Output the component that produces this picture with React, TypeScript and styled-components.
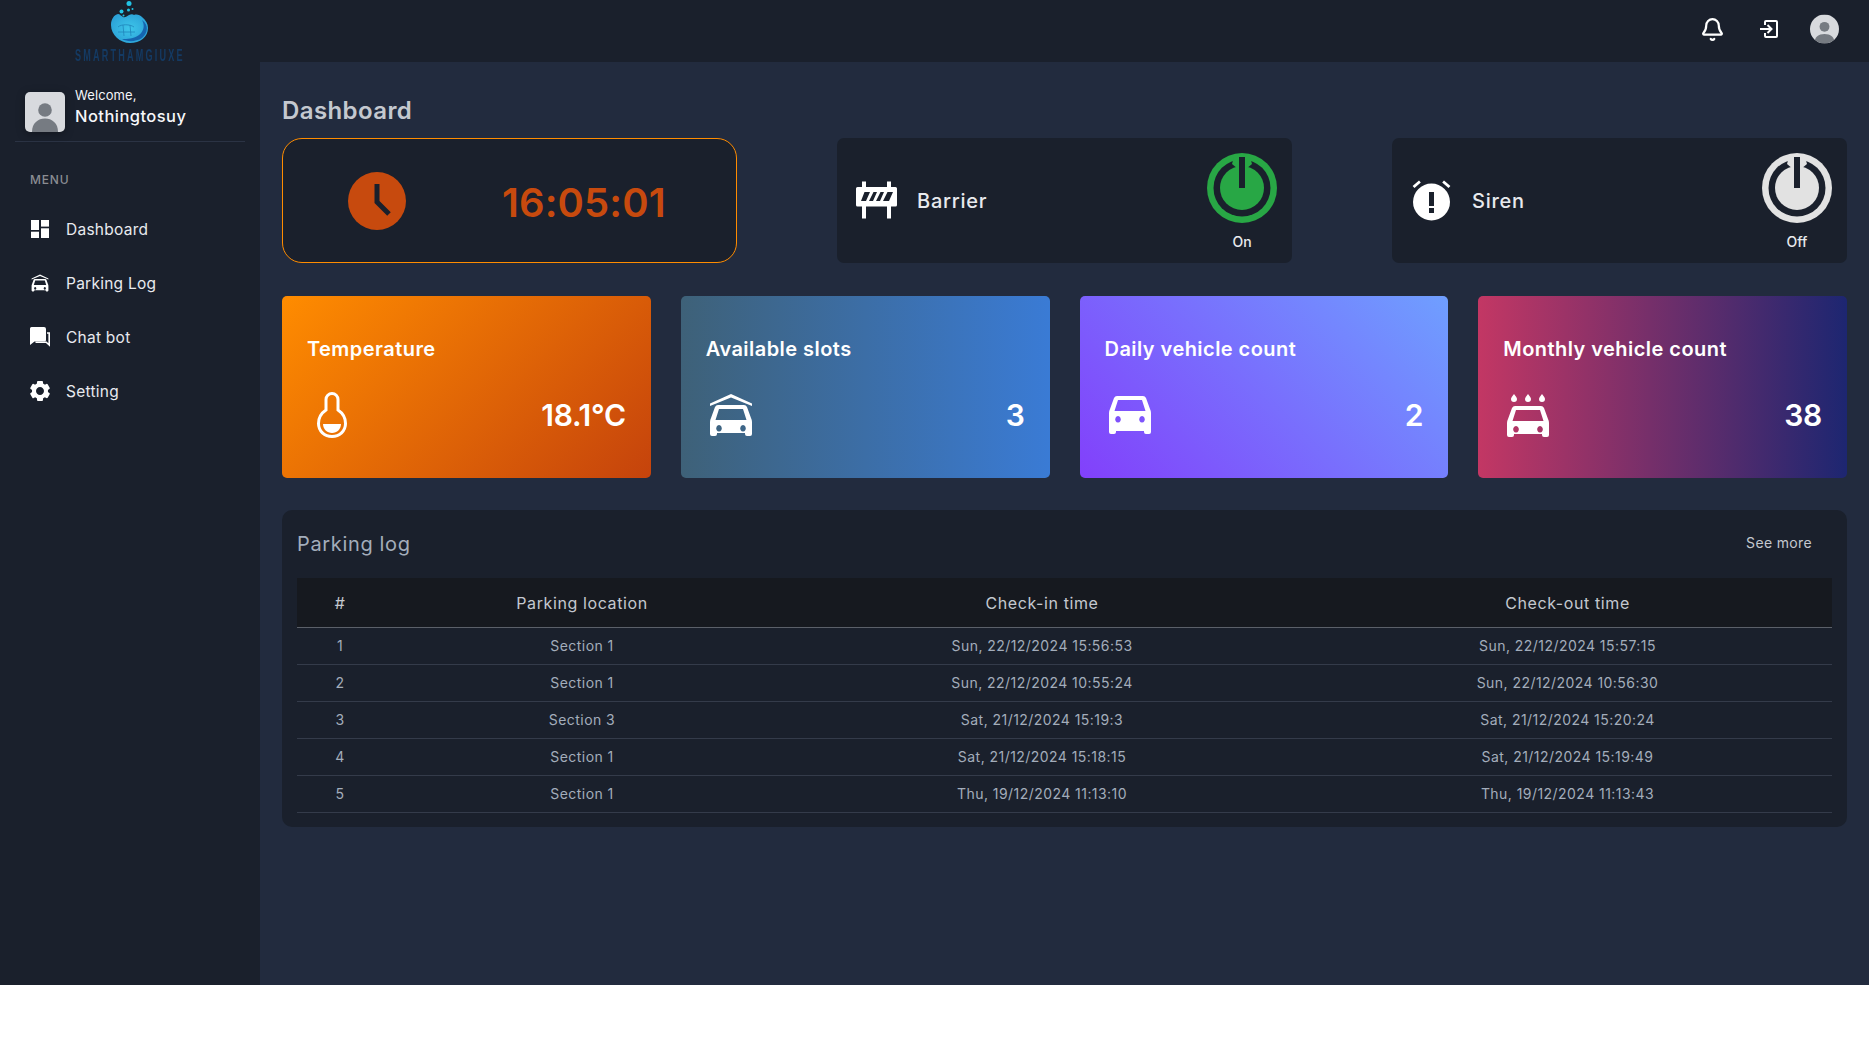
import React from "react";
import styled, { createGlobalStyle } from "styled-components";
import { Bell } from "lucide-react";
import { BiSolidCog } from "react-icons/bi";

const Global = createGlobalStyle`
  html, body { margin: 0; padding: 0; background: #fff; }
  body { font-family: Inter, "Liberation Sans", sans-serif; }
  * { box-sizing: border-box; }
`;

const Shell = styled.div`
  display: flex;
  width: 100%;
  height: 985px;
  background: #222b3e;
  color: #e8eaee;
`;
const Sidebar = styled.aside`
  width: 260px;
  flex: none;
  background: #1a202c;
  display: flex;
  flex-direction: column;
`;
const Brand = styled.div`
  height: 62px;
  display: flex;
  flex-direction: column;
  align-items: center;
`;
const BrandName = styled.div`
  font-family: "Liberation Sans", sans-serif;
  font-size: 16.5px;
  line-height: 14px;
  font-weight: 700;
  letter-spacing: 4px;
  color: #143a63;
  white-space: nowrap;
  transform: scaleX(0.55);
  margin-top: 4px;
`;
const UserBlock = styled.div`
  margin: 30px 15px 0;
  padding: 0 10px;
  height: 50px;
  display: flex;
  gap: 10px;
  border-bottom: 1px solid #2b3344;
`;
const UserText = styled.div`
  display: flex;
  flex-direction: column;
  margin-top: -6px;
`;
const Welcome = styled.span`
  font-size: 13px;
  line-height: 18px;
  letter-spacing: 0.1px;
  color: #f3f5f9;
`;
const UserName = styled.span`
  font-size: 16.5px;
  line-height: 24px;
  font-weight: 500;
  letter-spacing: 0.45px;
  color: #f6f7fa;
`;
const MenuLabel = styled.div`
  margin: 30px 0 0 30px;
  font-size: 12px;
  line-height: 16px;
  font-weight: 500;
  letter-spacing: 0.8px;
  color: #8b8d93;
`;
const Nav = styled.nav`
  display: flex;
  flex-direction: column;
  margin-top: 14px;
`;
const NavItem = styled.a`
  height: 54px;
  padding-left: 30px;
  display: flex;
  align-items: center;
  gap: 16px;
  font-size: 15.5px;
  font-weight: 400;
  letter-spacing: 0.25px;
  color: #e8eaef;
  svg { width: 20px; height: 20px; color: #fff; flex: none; }
`;
const CogGlyph = styled(BiSolidCog)`
  && { width: 24px; height: 24px; margin: 0 -2px; }
`;
const Main = styled.main`
  flex: 1;
  min-width: 0;
  display: flex;
  flex-direction: column;
`;
const TopBar = styled.header`
  height: 62px;
  background: #1a202c;
  display: flex;
  align-items: center;
  justify-content: flex-end;
  gap: 27px;
  padding: 0 30px 4px 0;
`;
const TopIcon = styled.span`
  width: 29px;
  height: 29px;
  display: flex;
  align-items: center;
  justify-content: center;
  color: #fff;
`;
const Content = styled.div`
  padding: 0 22px;
`;
const Title = styled.h1`
  margin: 33px 0 12px;
  font-size: 24px;
  line-height: 31px;
  font-weight: 600;
  letter-spacing: 0.4px;
  color: #c4c8cf;
`;
const TopRow = styled.div`
  display: grid;
  grid-template-columns: repeat(3, 1fr);
  column-gap: 100px;
`;
const ClockCard = styled.div`
  height: 125px;
  background: #1a202c;
  border: 1px solid #ff8c00;
  border-radius: 20px;
  display: flex;
  align-items: center;
  color: #c74a0e;
  padding-left: 65px;
`;
const ClockTime = styled.span`
  margin-left: 96px;
  padding-top: 3px;
  font-size: 40px;
  font-weight: 600;
  letter-spacing: 0.1px;
`;
const ControlCard = styled.div`
  height: 125px;
  background: #1a202c;
  border-radius: 7px;
  display: flex;
  align-items: center;
  padding: 0 15px 0 19px;
`;
const ControlIcon = styled.span`
  display: flex;
  width: 41px;
  height: 41px;
  color: #fff;
  flex: none;
`;
const ControlName = styled.span`
  margin-left: 20px;
  padding-top: 1px;
  font-size: 20px;
  font-weight: 500;
  letter-spacing: 0.75px;
  color: #e8eaee;
  flex: 1;
`;
const Power = styled.div<{ $on: boolean }>`
  margin-top: 3px;
  display: flex;
  flex-direction: column;
  align-items: center;
  color: ${(p) => (p.$on ? "#28a745" : "#e2e2e2")};
`;
const PowerLabel = styled.span`
  margin-top: 10px;
  font-size: 14px;
  line-height: 18px;
  font-weight: 500;
  color: #e8eaee;
`;
const StatRow = styled.div`
  margin-top: 33px;
  display: grid;
  grid-template-columns: repeat(4, 1fr);
  column-gap: 30px;
`;
const StatCard = styled.div<{ $bg: string }>`
  height: 182px;
  border-radius: 5px;
  background: ${(p) => p.$bg};
  padding: 40px 25px 0;
  color: #fff;
`;
const StatTitle = styled.div`
  font-size: 20px;
  line-height: 26px;
  font-weight: 600;
  letter-spacing: 0.45px;
`;
const StatBody = styled.div`
  margin-top: 28px;
  display: flex;
  align-items: center;
  justify-content: space-between;
  svg { width: 50px; height: 50px; display: block; }
`;
const StatValue = styled.span`
  font-size: 30px;
  font-weight: 600;
  letter-spacing: -0.3px;
`;
const LogCard = styled.section`
  margin-top: 32px;
  height: 317px;
  background: #1a202c;
  border-radius: 10px;
  padding: 0 15px;
`;
const LogHeader = styled.div`
  height: 68px;
  display: flex;
  align-items: center;
  justify-content: space-between;
  padding-right: 20px;
`;
const LogTitle = styled.h2`
  margin: 0;
  font-size: 20px;
  font-weight: 400;
  letter-spacing: 0.65px;
  color: #a3adbb;
`;
const SeeMore = styled.a`
  margin-top: -3px;
  font-size: 14px;
  letter-spacing: 0.35px;
  color: #c4c8cf;
`;
const Table = styled.table`
  width: 100%;
  border-collapse: collapse;
  table-layout: fixed;
`;
const Th = styled.th`
  height: 49px;
  padding-top: 3px;
  background: #16191f;
  border-bottom: 1px solid #5b6069;
  font-size: 16px;
  font-weight: 400;
  letter-spacing: 0.6px;
  text-align: center;
  color: #c4c8cf;
`;
const Td = styled.td`
  height: 37px;
  border-bottom: 1px solid #343b4a;
  font-size: 14px;
  letter-spacing: 0.45px;
  text-align: center;
  color: #a3adbb;
`;

const PersonSquare = () => (
  <svg width="40" height="40" viewBox="0 0 40 40" style={{ flex: "none", filter: "drop-shadow(0 2px 4px rgba(0,0,0,.3))" }}>
    <rect width="40" height="40" rx="5" fill="#d8dade" />
    <circle cx="20" cy="18" r="6.800" fill="#767b82" />
    <path d="M7 40c0-9 6-13.500 13-13.500S33 31 33 40z" fill="#767b82" />
  </svg>
);
const PersonRound = () => (
  <svg width="30" height="30" viewBox="0 0 40 40">
    <clipPath id="rnd"><circle cx="20" cy="20" r="20" /></clipPath>
    <g clipPath="url(#rnd)">
      <rect width="40" height="40" fill="#d8dade" />
      <circle cx="20" cy="17" r="6.800" fill="#767b82" />
      <path d="M6 40c0-9 6-13 14-13s14 4 14 13z" fill="#767b82" />
    </g>
  </svg>
);
const Logo = () => (
  <svg width="42" height="44" viewBox="0 0 42 44" style={{ display: "block", flex: "none" }}>
    <defs>
      <radialGradient id="lg" cx="0.5" cy="0.5" r="0.6">
        <stop offset="0" stopColor="#3ec6ea" />
        <stop offset="1" stopColor="#2a9fd6" />
      </radialGradient>
    </defs>
    <circle cx="20" cy="3.500" r="2.500" fill="#22c4e6" />
    <circle cx="12.500" cy="11.500" r="2" fill="#22c4e6" />
    <circle cx="19.500" cy="10" r="1.500" fill="#22c4e6" />
    <circle cx="23.500" cy="9" r="1" fill="#22c4e6" />
    <circle cx="14.500" cy="15.500" r="1" fill="#22c4e6" />
    <path d="M2 25c0-6 3-10 7-11 2 0 3 2 5 3 2 1 4-1 6-2 2-1 4-1 5 0 3-1 6 0 8 2 4 3 6 7 6 11 0 9-8 15-18 15S2 35 2 25z" fill="url(#lg)" />
    <path d="M33 20c3 5 2 11-3 15-5 4-12 4-17 4 5 3 14 3 20-1 6-5 7-13 0-18z" fill="#1565b0" />
    <path d="M9 27c3-3 12-3 16 0M9 32h17M14 25l1 11M21 25l1 11" stroke="#1f85bb" strokeWidth=".8" fill="none" />
  </svg>
);
const DashIcon = () => (
  <svg viewBox="0 0 20 20" fill="currentColor">
    <rect x="1" y="1" width="8" height="10" />
    <rect x="1" y="12.700" width="8" height="6.300" />
    <rect x="11" y="1" width="8" height="6.600" />
    <rect x="11" y="9.300" width="8" height="9.700" />
  </svg>
);
const ChatIcon = () => (
  <svg viewBox="0 0 20 20">
    <path d="M1.500 0H14q2 0 2 2v11q0 1.500-1.500 1.500H4.500L0 18V1.500Q0 0 1.500 0z" fill="currentColor" />
    <path d="M17 6h2.200v12l-3-2.800H5.500" fill="none" stroke="currentColor" strokeWidth="1.600" />
  </svg>
);
const LoginIcon = () => (
  <svg width="22" height="22" viewBox="0 0 22 22" fill="none" stroke="currentColor" strokeWidth="2">
    <path d="M7 7V4a1 1 0 0 1 1-1h10a1 1 0 0 1 1 1v14a1 1 0 0 1-1 1H8a1 1 0 0 1-1-1v-3" />
    <path d="M2 11h11M9.500 7l4 4-4 4" />
  </svg>
);
const ClockIcon = () => (
  <svg width="58" height="58" viewBox="-29 -29 58 58" style={{ flex: "none" }}>
    <circle r="29" fill="currentColor" />
    <path d="M0-17V1L12 13" fill="none" stroke="#1a202c" strokeWidth="5" />
  </svg>
);
const BarrierIcon = () => (
  <svg width="41" height="41" viewBox="0 0 41 41">
    <path d="M6 1.500h4V7h21V1.500h4V7h4.500q1.500 0 1.500 1.500V25q0 1.500-1.500 1.500H35v12h-4v-12H10v12H6v-12H1.500Q0 26.500 0 25V8.500Q0 7 1.500 7H6z" fill="#fff" />
    <path d="M8.500 12H14l-4 9H5zM17.500 12H21l-4 9h-4zM24.500 12H28l-4 9h-4zM31.500 12H37l-4 9h-6z" fill="#1a202c" />
  </svg>
);
const SirenIcon = () => (
  <svg width="41" height="41" viewBox="0 0 41 41">
    <circle cx="20.500" cy="22" r="18.500" fill="#fff" />
    <path d="M8 0.500l1.800 2L3.500 8 1.600 6zM33 0.500l-1.800 2L37.500 8l1.900-2z" fill="#fff" />
    <rect x="18" y="12" width="5" height="14" fill="#1a202c" />
    <rect x="18" y="28" width="5" height="5" fill="#1a202c" />
  </svg>
);
const PowerGlyph = () => (
  <svg width="70" height="70" viewBox="0 0 70 70">
    <circle cx="35" cy="35" r="35" fill="currentColor" />
    <circle cx="35" cy="35" r="28.500" fill="#1a202c" />
    <circle cx="35" cy="35" r="22" fill="currentColor" />
    <path d="M27 4h16l2 7-6 5h-8l-6-5z" fill="currentColor" />
    <rect x="32" y="4" width="6" height="31" fill="#1a202c" />
  </svg>
);
const Thermo = () => (
  <svg viewBox="0 0 50 50" fill="none">
    <path d="M19 9.500a6 6 0 0 1 12 0V20c4.500 3 7.500 8 7.500 13.500 0 7.500-6 13-13.500 13s-13.500-5.500-13.500-13c0-5.500 3-10.500 7.500-13.500z" stroke="#fff" strokeWidth="3" />
    <path d="M16 34h18c0 5-4 9-9 9s-9-4-9-9z" fill="#fff" />
  </svg>
);
const CarBody = ({ y, h }: { y: number; h: number }) => {
  const b = y + h;
  return (
    <path
      fillRule="evenodd"
      fill="#fff"
      d={`M12 ${y}H38Q40 ${y} 41 ${y + 2}L45 ${y + 13}Q46 ${y + 15} 46 ${y + 17}V${b - 2}Q46 ${b} 44 ${b}H41Q39 ${b} 39 ${b - 2}V${b - 3}H11V${b - 2}Q11 ${b} 9 ${b}H6Q4 ${b} 4 ${b - 2}V${y + 17}Q4 ${y + 15} 5 ${y + 13}L9 ${y + 2}Q10 ${y} 12 ${y}Z
      M13 ${y + 4}H37L40.500 ${y + 15}H9.500Z
      M13 ${y + 20}a2.800 3.300 0 1 0 .01 0Z
      M37 ${y + 20}a2.800 3.300 0 1 0 .01 0Z`}
    />
  );
};
const CarIcon = () => (
  <svg viewBox="0 0 50 50"><CarBody y={6} h={38} /></svg>
);
const GarageIcon = () => (
  <svg viewBox="0 0 50 50" fill="#fff">
    <path d="M25 4L46 13.500V16L25 7.500 4 16V13.500z" />
    <CarBody y={15} h={31} />
  </svg>
);
const WashIcon = () => (
  <svg viewBox="0 0 50 50" fill="#fff">
    <path d="M11 4q3 3.500 3 5a3 3 0 0 1-6 0q0-1.500 3-5zM25 4q3 3.500 3 5a3 3 0 0 1-6 0q0-1.500 3-5zM39 4q3 3.500 3 5a3 3 0 0 1-6 0q0-1.500 3-5z" />
    <CarBody y={16} h={31} />
  </svg>
);

const rows = [
  ["1", "Section 1", "Sun, 22/12/2024 15:56:53", "Sun, 22/12/2024 15:57:15"],
  ["2", "Section 1", "Sun, 22/12/2024 10:55:24", "Sun, 22/12/2024 10:56:30"],
  ["3", "Section 3", "Sat, 21/12/2024 15:19:3", "Sat, 21/12/2024 15:20:24"],
  ["4", "Section 1", "Sat, 21/12/2024 15:18:15", "Sat, 21/12/2024 15:19:49"],
  ["5", "Section 1", "Thu, 19/12/2024 11:13:10", "Thu, 19/12/2024 11:13:43"],
];

export default function App() {
  return (
    <>
      <Global />
      <Shell>
        <Sidebar>
          <Brand>
            <Logo />
            <BrandName>SMARTHAMGIUXE</BrandName>
          </Brand>
          <UserBlock>
            <PersonSquare />
            <UserText>
              <Welcome>Welcome,</Welcome>
              <UserName>Nothingtosuy</UserName>
            </UserText>
          </UserBlock>
          <MenuLabel>MENU</MenuLabel>
          <Nav>
            <NavItem><DashIcon />Dashboard</NavItem>
            <NavItem><GarageIcon />Parking Log</NavItem>
            <NavItem><ChatIcon />Chat bot</NavItem>
            <NavItem><CogGlyph />Setting</NavItem>
          </Nav>
        </Sidebar>
        <Main>
          <TopBar>
            <TopIcon><Bell size={25} strokeWidth={2.1} /></TopIcon>
            <TopIcon><LoginIcon /></TopIcon>
            <TopIcon><PersonRound /></TopIcon>
          </TopBar>
          <Content>
            <Title>Dashboard</Title>
            <TopRow>
              <ClockCard>
                <ClockIcon />
                <ClockTime>16:05:01</ClockTime>
              </ClockCard>
              <ControlCard>
                <ControlIcon><BarrierIcon /></ControlIcon>
                <ControlName>Barrier</ControlName>
                <Power $on>
                  <PowerGlyph />
                  <PowerLabel>On</PowerLabel>
                </Power>
              </ControlCard>
              <ControlCard>
                <ControlIcon><SirenIcon /></ControlIcon>
                <ControlName>Siren</ControlName>
                <Power $on={false}>
                  <PowerGlyph />
                  <PowerLabel>Off</PowerLabel>
                </Power>
              </ControlCard>
            </TopRow>
            <StatRow>
              <StatCard $bg="linear-gradient(135deg, #ff8c00, #c5430c)">
                <StatTitle>Temperature</StatTitle>
                <StatBody><Thermo /><StatValue>18.1°C</StatValue></StatBody>
              </StatCard>
              <StatCard $bg="linear-gradient(90deg, #3e6178, #3a7bd5)">
                <StatTitle>Available slots</StatTitle>
                <StatBody><GarageIcon /><StatValue>3</StatValue></StatBody>
              </StatCard>
              <StatCard $bg="linear-gradient(45deg, #8240fb, #6f9fff)">
                <StatTitle>Daily vehicle count</StatTitle>
                <StatBody><CarIcon /><StatValue>2</StatValue></StatBody>
              </StatCard>
              <StatCard $bg="linear-gradient(90deg, #c33764, #1d2671)">
                <StatTitle>Monthly vehicle count</StatTitle>
                <StatBody><WashIcon /><StatValue>38</StatValue></StatBody>
              </StatCard>
            </StatRow>
            <LogCard>
              <LogHeader>
                <LogTitle>Parking log</LogTitle>
                <SeeMore>See more</SeeMore>
              </LogHeader>
              <Table>
                <colgroup>
                  <col style={{ width: 86 }} />
                  <col style={{ width: 398 }} />
                  <col style={{ width: 522 }} />
                  <col />
                </colgroup>
                <thead>
                  <tr>
                    <Th>#</Th>
                    <Th>Parking location</Th>
                    <Th>Check-in time</Th>
                    <Th>Check-out time</Th>
                  </tr>
                </thead>
                <tbody>
                  {rows.map((r) => (
                    <tr key={r[0]}>
                      {r.map((c, i) => (
                        <Td key={i}>{c}</Td>
                      ))}
                    </tr>
                  ))}
                </tbody>
              </Table>
            </LogCard>
          </Content>
        </Main>
      </Shell>
    </>
  );
}
